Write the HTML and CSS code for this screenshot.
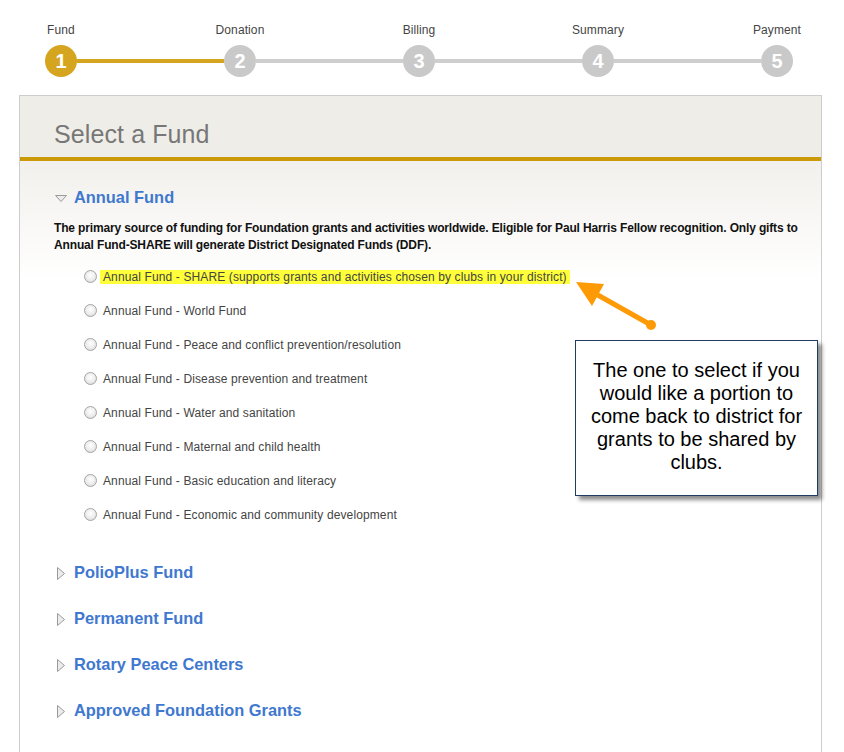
FILE: index.html
```html
<!DOCTYPE html>
<html lang="en">
<head>
<meta charset="utf-8">
<title>Select a Fund</title>
<link rel="stylesheet" href="styles.css">
</head>
<body>
<div class="steps">
  <div class="step done"><span class="step-label">Fund</span><span class="step-num">1</span></div>
  <div class="step-bar done"></div>
  <div class="step"><span class="step-label">Donation</span><span class="step-num">2</span></div>
  <div class="step-bar"></div>
  <div class="step"><span class="step-label">Billing</span><span class="step-num">3</span></div>
  <div class="step-bar"></div>
  <div class="step"><span class="step-label">Summary</span><span class="step-num">4</span></div>
  <div class="step-bar"></div>
  <div class="step"><span class="step-label">Payment</span><span class="step-num">5</span></div>
</div>

<div class="panel">
  <div class="panel-head"><h1 class="panel-title">Select a Fund</h1></div>
  <div class="panel-body">
    <div class="fund">
      <h2 class="fund-title"><svg class="tri-down" width="12" height="7" viewBox="0 0 12 7"><path d="M0.5 0.5 H11.5 L6 6.5 Z" fill="#ececec" stroke="#9a9a9a" stroke-width="1"/></svg>Annual Fund</h2>
      <p class="fund-desc">The primary source of funding for Foundation grants and activities worldwide. Eligible for Paul Harris Fellow recognition. Only gifts to Annual Fund-SHARE will generate District Designated Funds (DDF).</p>
      <ul class="options">
        <li class="option"><span class="radio"></span><span class="option-text hl">Annual Fund - SHARE (supports grants and activities chosen by clubs in your district)</span></li>
        <li class="option"><span class="radio"></span><span class="option-text">Annual Fund - World Fund</span></li>
        <li class="option"><span class="radio"></span><span class="option-text">Annual Fund - Peace and conflict prevention/resolution</span></li>
        <li class="option"><span class="radio"></span><span class="option-text">Annual Fund - Disease prevention and treatment</span></li>
        <li class="option"><span class="radio"></span><span class="option-text">Annual Fund - Water and sanitation</span></li>
        <li class="option"><span class="radio"></span><span class="option-text">Annual Fund - Maternal and child health</span></li>
        <li class="option"><span class="radio"></span><span class="option-text">Annual Fund - Basic education and literacy</span></li>
        <li class="option"><span class="radio"></span><span class="option-text">Annual Fund - Economic and community development</span></li>
      </ul>
    </div>
    <h2 class="fund-title closed"><svg class="tri-right" width="8" height="13" viewBox="0 0 8 13"><path d="M0.5 0.5 L7.5 6.5 L0.5 12.5 Z" fill="#ececec" stroke="#9a9a9a" stroke-width="1"/></svg>PolioPlus Fund</h2>
    <h2 class="fund-title closed"><svg class="tri-right" width="8" height="13" viewBox="0 0 8 13"><path d="M0.5 0.5 L7.5 6.5 L0.5 12.5 Z" fill="#ececec" stroke="#9a9a9a" stroke-width="1"/></svg>Permanent Fund</h2>
    <h2 class="fund-title closed"><svg class="tri-right" width="8" height="13" viewBox="0 0 8 13"><path d="M0.5 0.5 L7.5 6.5 L0.5 12.5 Z" fill="#ececec" stroke="#9a9a9a" stroke-width="1"/></svg>Rotary Peace Centers</h2>
    <h2 class="fund-title closed"><svg class="tri-right" width="8" height="13" viewBox="0 0 8 13"><path d="M0.5 0.5 L7.5 6.5 L0.5 12.5 Z" fill="#ececec" stroke="#9a9a9a" stroke-width="1"/></svg>Approved Foundation Grants</h2>
  </div>

  <svg class="arrow" width="110" height="70" viewBox="0 0 110 70">
    <line x1="91" y1="55" x2="36" y2="24" stroke="#fd9a05" stroke-width="5"/>
    <polygon points="16,12 44,14 32,36" fill="#fd9a05"/>
    <circle cx="91" cy="55" r="5" fill="#fd9a05"/>
  </svg>
  <div class="callout">The one to select if you would like a portion to come back to district for grants to be shared by clubs.</div>
</div>
</body>
</html>
```

FILE: styles.css
```css
html, body {
  margin: 0;
  padding: 0;
  background: #ffffff;
  font-family: "Liberation Sans", Arial, sans-serif;
}

.steps {
  display: flex;
  width: 748px;
  margin-left: 45px;
  padding-top: 23px;
}

.step {
  width: 32px;
  display: flex;
  flex-direction: column;
  align-items: center;
}

.step-label {
  font-size: 12px;
  line-height: 14px;
  color: #444;
  white-space: nowrap;
  letter-spacing: 0.1px;
  margin-bottom: 8px;
}

.step-num {
  width: 32px;
  height: 32px;
  border-radius: 50%;
  background: #c9c9c9;
  color: #fff;
  font-weight: bold;
  font-size: 20px;
  line-height: 32px;
  text-align: center;
}

.step.done .step-num {
  background: #d6a51f;
}

.step-bar {
  flex: 1;
  height: 4px;
  align-self: flex-end;
  margin-bottom: 14px;
  background: #cecece;
}

.step-bar.done {
  background: #d6a51f;
}

.panel {
  position: relative;
  margin: 18px 0 0 19px;
  width: 803px;
  box-sizing: border-box;
  border: 1px solid #cdcdcd;
  border-bottom: none;
}

.panel-head {
  height: 65px;
  box-sizing: border-box;
  padding: 24px 0 0 34px;
  background: #efede8;
  border-bottom: 4px solid #cc9a08;
}

.panel-title {
  margin: 0;
  font-size: 25px;
  line-height: 28px;
  font-weight: normal;
  color: #777;
  letter-spacing: 0.1px;
}

.panel-body {
  padding: 26px 8px 60px 34px;
  background: linear-gradient(to bottom, #f2f0ec 0px, #ffffff 120px);
}

.fund-title {
  margin: 0;
  font-size: 16.4px;
  line-height: 20px;
  font-weight: bold;
  color: #3f78cf;
}

.fund-title.closed {
  margin-top: 26px;
}

.fund + .fund-title.closed {
  margin-top: 30px;
}

.tri-down {
  vertical-align: middle;
  margin: 0 7px 0 1px;
}

.tri-right {
  vertical-align: middle;
  margin: 0 9px 0 3px;
}

.fund-desc {
  margin: 13px 0 0 0;
  font-size: 12px;
  line-height: 17px;
  font-weight: bold;
  color: #111;
  letter-spacing: -0.15px;
}

.options {
  list-style: none;
  margin: 6px 0 0 0;
  padding: 0;
}

.option {
  height: 34px;
  line-height: 34px;
  font-size: 12px;
  color: #444;
  padding-left: 30px;
}

.radio {
  display: inline-block;
  width: 13px;
  height: 13px;
  box-sizing: border-box;
  border-radius: 50%;
  border: 1px solid #a4a4a4;
  background: radial-gradient(circle at 50% 40%, #ffffff 0%, #ececec 55%, #cfcfcf 100%);
  vertical-align: middle;
  margin: -2px 3px 0 0;
}

.option-text {
  padding: 0 3px;
  letter-spacing: 0.12px;
}

.option-text.hl {
  background: #ffff3a;
}

.arrow {
  position: absolute;
  left: 540px;
  top: 174px;
}

.callout {
  position: absolute;
  left: 555px;
  top: 244px;
  width: 243px;
  height: 156px;
  box-sizing: border-box;
  padding: 18px 10px 0 10px;
  background: #fff;
  border: 1.5px solid #213c63;
  box-shadow: 4px 4px 4px rgba(0, 0, 0, 0.45);
  font-size: 20px;
  line-height: 23px;
  color: #000;
  text-align: center;
}
```
